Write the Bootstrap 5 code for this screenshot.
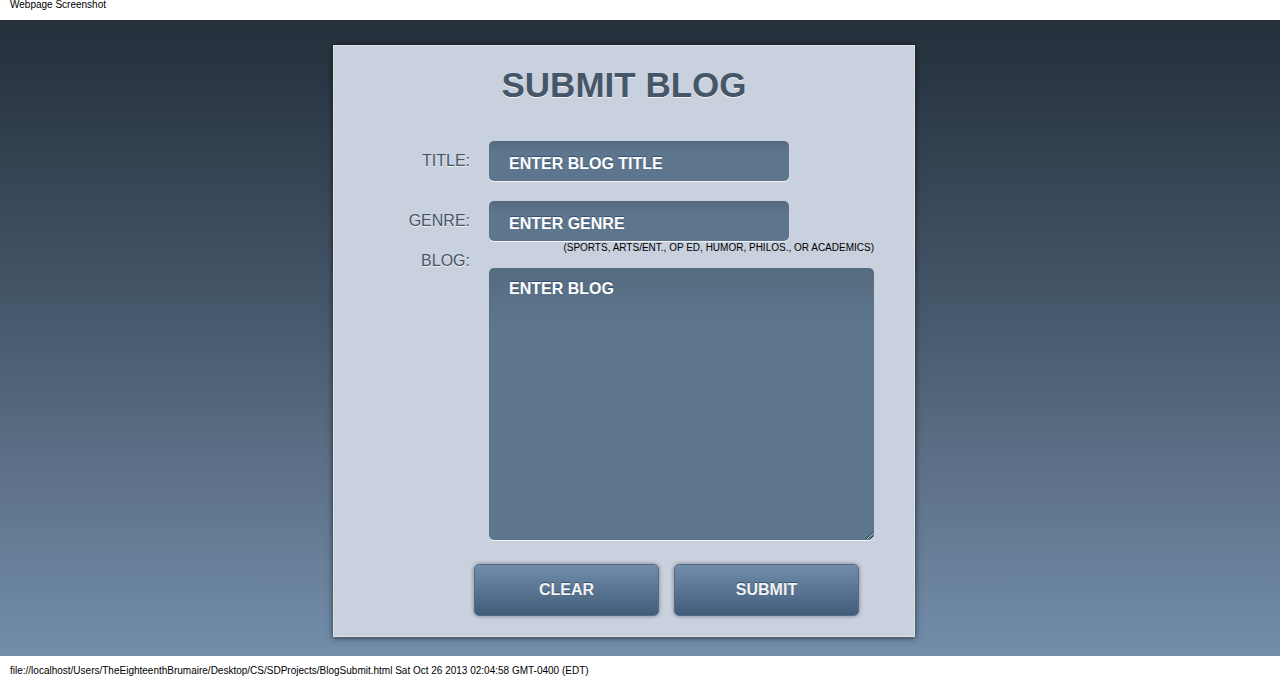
<!DOCTYPE html>
<html lang="en">
<head>
<meta charset="utf-8">
<meta name="viewport" content="width=device-width, initial-scale=1">
<title>Submit Blog</title>
<link rel="stylesheet" href="https://cdn.jsdelivr.net/npm/bootstrap@5.3.0/dist/css/bootstrap.min.css">
<style>
  body { font-family: "Liberation Sans", Arial, sans-serif; background: #fff; color: #000; }
  .page-note { font-size: 10px; line-height: 10px; padding: 0 10px; }
  .page-top { height: 20px; }
  .page-bottom { padding-top: 10px; }
  .backdrop { background: linear-gradient(#25303b, #2b3745 10%, #4a5c70 50%, #60758d 75%, #728eaa); padding: 25px 32px 19px 0; }
  .blog-form { width: 582px; max-width: 100%; background: #c9d0de; border: 1px solid #e1e1e1; box-shadow: 0 1px 6px rgba(0,0,0,.6); padding: 20px 40px 20px 20px; }
  .form-heading { font-size: 35px; line-height: 38px; font-weight: 700; color: #445668; text-shadow: 0 1px 0 #f2f2f2; margin: 0 -20px 37px 0; }
  .field-label { width: 116px; margin-right: 19px; line-height: 40px; font-size: 16px; color: #445668; text-shadow: 0 1px 0 #f2f2f2; text-align: right; }
  .field-box, .field-box:focus { background: #5e768d linear-gradient(#546a7f, #5e768d 12px) no-repeat; border: 0; border-radius: 5px; box-shadow: 0 1px 0 #f2f2f2; color: #fff; font-size: 16px; line-height: 20px; font-weight: 700; padding: 14px 20px 8px; }
  .field-box::placeholder { color: #fff; opacity: 1; text-shadow: 0 -1px 0 #334f71; }
  .line-box { width: 300px; height: 40px; }
  .genre-row { margin-top: 20px; }
  .blog-box, .blog-box:focus { height: 272px; padding-top: 11px; background: #5e768d linear-gradient(#546a7f, #5e768d 54px) no-repeat; resize: both; }
  .genre-hint { font-size: 10px; line-height: 14px; margin-bottom: 13px; }
  .form-actions { gap: 15px; margin: 24px 15px 0 120px; }
  .action-btn { height: 52px; border: 1px solid #546a86; border-radius: 5px; font-size: 16px; font-weight: 700; color: #f2f2f2; background: linear-gradient(#718dab, #415d7a); text-shadow: 0 -1px 0 #334f71; box-shadow: 0 0 4px rgba(0,0,0,.4); }
  .action-btn:hover { color: #fff; border-color: #334f71; }
</style>
</head>
<body class="d-flex flex-column min-vh-100">
  <header class="page-note page-top">Webpage Screenshot</header>
  <main class="backdrop flex-grow-1 d-flex justify-content-center align-items-start">
    <form class="blog-form">
      <h1 class="form-heading text-center">SUBMIT BLOG</h1>
      <div class="d-flex">
        <label class="field-label flex-shrink-0" for="title">TITLE:</label>
        <input class="form-control field-box line-box" id="title" type="text" placeholder="ENTER BLOG TITLE">
      </div>
      <div class="d-flex genre-row">
        <label class="field-label flex-shrink-0" for="genre">GENRE:</label>
        <input class="form-control field-box line-box" id="genre" type="text" placeholder="ENTER GENRE" aria-describedby="genre-hint">
      </div>
      <div class="d-flex">
        <label class="field-label flex-shrink-0" for="blog">BLOG:</label>
        <div class="flex-grow-1">
          <div class="genre-hint text-end" id="genre-hint">(SPORTS, ARTS/ENT., OP ED, HUMOR, PHILOS., OR ACADEMICS)</div>
          <textarea class="form-control field-box blog-box" id="blog" placeholder="ENTER BLOG"></textarea>
        </div>
      </div>
      <div class="form-actions d-flex">
        <button class="btn action-btn flex-fill w-50" type="reset">CLEAR</button>
        <button class="btn action-btn flex-fill w-50" type="submit">SUBMIT</button>
      </div>
    </form>
  </main>
  <footer class="page-note page-bottom">file://localhost/Users/TheEighteenthBrumaire/Desktop/CS/SDProjects/BlogSubmit.html Sat Oct 26 2013 02:04:58 GMT-0400 (EDT)</footer>
<script src="https://cdn.jsdelivr.net/npm/bootstrap@5.3.0/dist/js/bootstrap.bundle.min.js"></script>
</body>
</html>
